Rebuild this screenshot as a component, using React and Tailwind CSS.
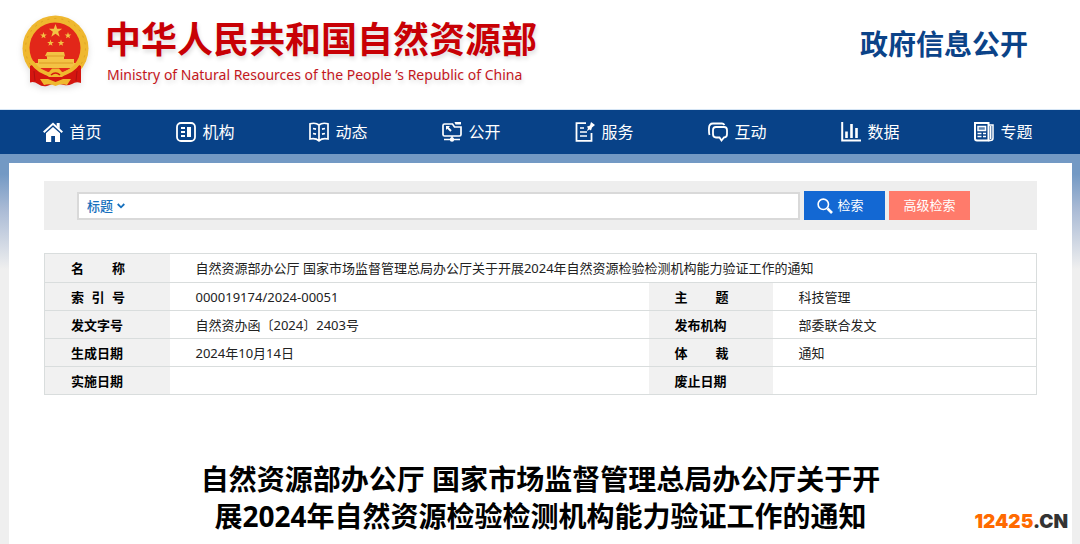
import React, { useState } from 'react';

const NAV_ITEMS = [
    { label: '首页', icon: HomeIcon },
    { label: '机构', icon: OrgIcon },
    { label: '动态', icon: BookIcon },
    { label: '公开', icon: OpenIcon },
    { label: '服务', icon: ServiceIcon },
    { label: '互动', icon: ChatIcon },
    { label: '数据', icon: DataIcon },
    { label: '专题', icon: TopicIcon },
];

const ROWS = [
    [['索', '引', '号'], '000019174/2024-00051', ['主', '题'], '科技管理'],
    [['发文字号'], '自然资办函〔2024〕2403号', ['发布机构'], '部委联合发文'],
    [['生成日期'], '2024年10月14日', ['体', '裁'], '通知'],
    [['实施日期'], '', ['废止日期'], ''],
];

function NavSvg({ children }) {
    return (
        <svg className="w-5 h-5 shrink-0" viewBox="0 0 20 20" fill="none" stroke="currentColor" strokeWidth="1.5" aria-hidden="true">
            {children}
        </svg>
    );
}

function HomeIcon() {
    return (
        <NavSvg>
            <path d="M.7 10.3 10 1.8l9.3 8.5" strokeWidth="2" />
            <path d="M13.7 1h3v6l-3-2.7Z" fill="currentColor" stroke="none" />
            <path d="M3 11.2 10 5l7 6.2V20h-5v-6H8.2v6H3Z" fill="currentColor" stroke="none" />
        </NavSvg>
    );
}

function OrgIcon() {
    return (
        <NavSvg>
            <rect x="1" y="1" width="18" height="18" rx="4" strokeWidth="1.8" />
            <path d="M5 6h4M5 10h4M5 14h4" strokeWidth="2" />
            <path d="M11 5h4v10h-4z" fill="currentColor" stroke="none" />
        </NavSvg>
    );
}

function BookIcon() {
    return (
        <NavSvg>
            <path d="M10 3C7.5 1 4 1 1 1.8V17c3.5-.7 6.5-.5 9 1.8 2.5-2.3 5.5-2.500 9-1.800V1.800C16 1 12.5 1 10 3Zm0 0v15.5" strokeWidth="1.7" />
            <path d="m4 6.500 3 .7M4 11.500l3 .7M16 6.500l-3 .7M16 11.500l-3 .7" strokeWidth="1.7" />
        </NavSvg>
    );
}

function OpenIcon() {
    return (
        <NavSvg>
            <path d="M10.500 2H2.500Q1 2 1 3.500v9Q1 14 2.500 14h15q1.500 0 1.500-1.500V5h-6.500Z" strokeWidth="1.700" />
            <path d="M12.500 0H19v2.500h-5.500Z" fill="currentColor" stroke="none" />
            <path d="m5 5 4 4" strokeWidth="2" />
            <path d="M4 4h4L4 8Z" fill="currentColor" stroke="none" />
            <path d="M10 14v2M2 17.500h16" />
            <circle cx="10" cy="17.500" r="2.200" fill="currentColor" stroke="none" />
        </NavSvg>
    );
}

function ServiceIcon() {
    return (
        <NavSvg>
            <path d="M11 1.200H1.500v17.600h15V11" strokeWidth="1.800" />
            <path d="M5 6h4M5 10h7M5 14h7" strokeWidth="1.600" />
            <path d="m16 0 4 3-3 2.500-1 3-1.500-1L12 9l1-3-1.200-1.200L15 3.500Z" fill="currentColor" stroke="none" />
        </NavSvg>
    );
}

function ChatIcon() {
    return (
        <NavSvg>
            <path d="M1.500 13Q.8 11 1 6q0-4.500 4-4.500h9q1.500 0 2.500 1.500" strokeWidth="1.800" />
            <path d="M8 5h8q3 0 3 3v4q0 3.500-3 3.500L13.500 18.500l-2-3H8q-3 0-3-3.500V8q0-3 3-3Z" strokeWidth="1.800" />
        </NavSvg>
    );
}

function DataIcon() {
    return (
        <NavSvg>
            <path d="M1.200 0v18.500H20" strokeWidth="2" />
            <path d="M5.500 16V9.500M10.500 16V2M15.500 16V6" strokeWidth="2.600" />
        </NavSvg>
    );
}

function TopicIcon() {
    return (
        <NavSvg>
            <path d="M1 1h13.500v17.500H3q-2 0-2-2Z" strokeWidth="2" />
            <path d="M14.500 3H19v13q0 2.500-2.500 2.500H14M16.700 4v13" />
            <path d="M4 4.500h7.500v4H4Z" fill="currentColor" fillOpacity=".35" />
            <path d="M3.500 11.500h4M3.500 14.500h4M9 11.500h3M9 14.500h3" />
        </NavSvg>
    );
}

function Star({ x, y, r }) {
    return (
        <path
            transform={`translate(${x} ${y}) scale(${r})`}
            d="M0-1 .24-.32.95-.31.38.12.59.81 0 .4-.59.81-.38.12-.95-.31-.24-.32Z"
            fill="#f3c344"
        />
    );
}

function Emblem() {
    return (
        <svg className="w-[68px] h-[74px] shrink-0 drop-shadow-md" viewBox="0 0 68 74" role="img" aria-label="国徽">
            <circle cx="33.5" cy="33.5" r="33" fill="#efb82f" />
            <circle cx="33.5" cy="33.5" r="30" fill="none" stroke="#dba324" strokeWidth="1" strokeDasharray="2 5" />
            <circle cx="33" cy="33" r="25.5" fill="#e22719" />
            <Star x="33.5" y="16" r="7" />
            <Star x="21.5" y="20.5" r="3.5" />
            <Star x="46" y="20.5" r="3.5" />
            <Star x="28.5" y="28" r="3.5" />
            <Star x="39" y="28" r="3.5" />
            <path d="M25 37h17l1 4h-1v3h10v4h4v5H12v-5h4v-4h9v-3h-2Z" fill="#f3c344" />
            <path d="M24 41h19M17 48h34" stroke="#dd9a24" strokeWidth="1" />
            {/* Red drapery with the gold knot in the middle */}
            <path d="M10 50q9 10 23.500 11Q48 60 57 50l2 1v17q-5-2-9 1-4 2-8 1l-8.500-2L25 71q-5 1-9-2-4-3-8-1.500V51Z" fill="#d4160f" />
            <path d="M10 47q7 11 21 13M57 47q-7 11-21 13" stroke="#efb82f" strokeWidth="4" fill="none" />
            <path d="m27 57 3-3.500h7l3 3.500 4 2-4 3H27l-4-3Z" fill="#efb82f" />
            <path d="M29 60q4.500-4 9 0" stroke="#d4160f" strokeWidth="1.5" fill="none" />
            <path d="m18 64 8 0 7.500 3 7.500-3h8l-4 6q-6-2-11.500 1Q28 68 22 70Z" fill="#efb82f" />
            <path d="m12 56 1 10M55 56l-1 10" stroke="#b01010" strokeWidth="1" />
        </svg>
    );
}

// Spreads the characters of short labels over the width of four characters
const RowLabel = ({ parts }) => (
    <th scope="row" className="bg-[#f1f1f1] pl-[26px] text-left font-bold text-black">
        <span className="flex w-[54px] justify-between">
            {parts.map((part) => (
                <span key={part}>{part}</span>
            ))}
        </span>
    </th>
);

const Header = () => (
    <header className="flex h-[110px] items-start justify-between border-b border-[#d5e5f5] bg-white pl-[22px] pr-[52px]">
        <div className="flex gap-[15px] pt-[15px]">
            <Emblem />
            <div>
                <h1 className="text-[36px] leading-[50px] font-bold whitespace-nowrap text-[#c80005] [text-shadow:1px_3px_4px_#0002]">
                    中华人民共和国自然资源部
                </h1>
                <p className="pl-0.5 text-[14px] leading-5 whitespace-nowrap text-[#c4161c] [text-shadow:1px_3px_4px_#0002]">
                    Ministry of Natural Resources of the People ’s Republic of China
                </p>
            </div>
        </div>
        <p className="pt-6 text-[28px] leading-10 font-bold whitespace-nowrap text-[#0b4388]">政府信息公开</p>
    </header>
);

const NavBar = () => (
    <nav className="h-11 bg-[#084288] pr-2.5 pl-1.5 text-white">
        <ul className="flex h-full">
            {NAV_ITEMS.map(({ label, icon: Icon }) => (
                <li key={label} className="flex-1">
                    <a href="#" className="flex h-full items-center justify-center gap-1.5 text-[16px]">
                        <Icon />
                        {label}
                    </a>
                </li>
            ))}
        </ul>
    </nav>
);

const SearchBar = () => {
    const [field, setField] = useState('title');
    const [keyword, setKeyword] = useState('');

    return (
        <form
            className="flex items-center gap-1 bg-[#eee] py-2.5 pr-[67px] pl-[33px]"
            onSubmit={(e) => e.preventDefault()}
        >
            <div className="flex h-7 flex-1 items-center border-2 border-[#d9d9d9] bg-white pl-2">
                <div className="grid items-center">
                    <select
                        aria-label="检索范围"
                        value={field}
                        onChange={(e) => setField(e.target.value)}
                        className="col-start-1 row-start-1 w-[38px] appearance-none text-[13px] leading-5 font-medium text-[#1670bd] outline-none"
                    >
                        <option value="title">标题</option>
                    </select>
                    <svg className="pointer-events-none col-start-1 row-start-1 h-2 w-2 justify-self-end" viewBox="0 0 8 8" fill="none" stroke="#1670bd" strokeWidth="1.8">
                        <path d="m.7 2 3.300 3.300L7.300 2" />
                    </svg>
                </div>
                <input
                    type="text"
                    aria-label="关键词"
                    value={keyword}
                    onChange={(e) => setKeyword(e.target.value)}
                    className="ml-2 h-full min-w-0 flex-1 text-[13px] outline-none"
                />
            </div>
            <button type="submit" className="flex h-[29px] w-[81px] items-center justify-center gap-1 bg-[#1368d3] pr-2 text-[13px] text-white">
                <svg className="h-4 w-4" viewBox="0 0 16 16" fill="none" stroke="currentColor" aria-hidden="true">
                    <circle cx="6.3" cy="6.3" r="5.2" strokeWidth="1.6" />
                    <path d="m10.5 10.5 4.500 4.500" strokeWidth="2.6" />
                </svg>
                检索
            </button>
            <button type="button" className="h-[29px] w-[81px] bg-[#ff7b6b] text-[13px] text-white">
                高级检索
            </button>
        </form>
    );
};

const InfoTable = () => (
    <table className="mt-[23px] w-full table-fixed border border-[#d9dddd] text-[13px] leading-5 text-[#222]">
        <colgroup>
            <col className="w-[125px]" />
            <col />
            <col className="w-[124px]" />
            <col className="w-[264px]" />
        </colgroup>
        <tbody>
            <tr className="h-[29px] border-b border-[#d9dddd]">
                <RowLabel parts={['名', '称']} />
                <td colSpan={3} className="pl-[26px]">
                    自然资源部办公厅 国家市场监督管理总局办公厅关于开展2024年自然资源检验检测机构能力验证工作的通知
                </td>
            </tr>
            {ROWS.map(([label, value, label2, value2]) => (
                <tr key={label.join('')} className="h-7 border-b border-[#d9dddd]">
                    <RowLabel parts={label} />
                    <td className="pl-[26px]">{value}</td>
                    <RowLabel parts={label2} />
                    <td className="pl-[26px]">{value2}</td>
                </tr>
            ))}
        </tbody>
    </table>
);

const App = () => {
    return (
        <div className="relative flex min-h-screen flex-col bg-[#efefef] font-['Noto_Sans','Noto_Sans_CJK_SC',sans-serif]">
            <Header />
            <NavBar />
            <div className="flex flex-1 flex-col bg-[linear-gradient(#7399c4_0px,#7399c4_20px,#a9bad5_55px,#efefef_115px)] pt-[9px] pr-2 pl-[9px]">
                <main className="flex-1 bg-white px-[35px] pt-[18px]">
                    <SearchBar />
                    <InfoTable />
                    <h2 className="mx-auto mt-[66px] max-w-[700px] text-center text-[28px] leading-[37px] font-bold text-black">
                        自然资源部办公厅 国家市场监督管理总局办公厅关于开
                        <br />
                        展2024年自然资源检验检测机构能力验证工作的通知
                    </h2>
                </main>
            </div>
            <div className="absolute right-3 bottom-2.5 font-['Inter',sans-serif] text-[19px] leading-6 font-black text-[#333]">
                <span className="text-[#ff6a00]">12425</span>.CN
            </div>
        </div>
    );
};

export default App;
